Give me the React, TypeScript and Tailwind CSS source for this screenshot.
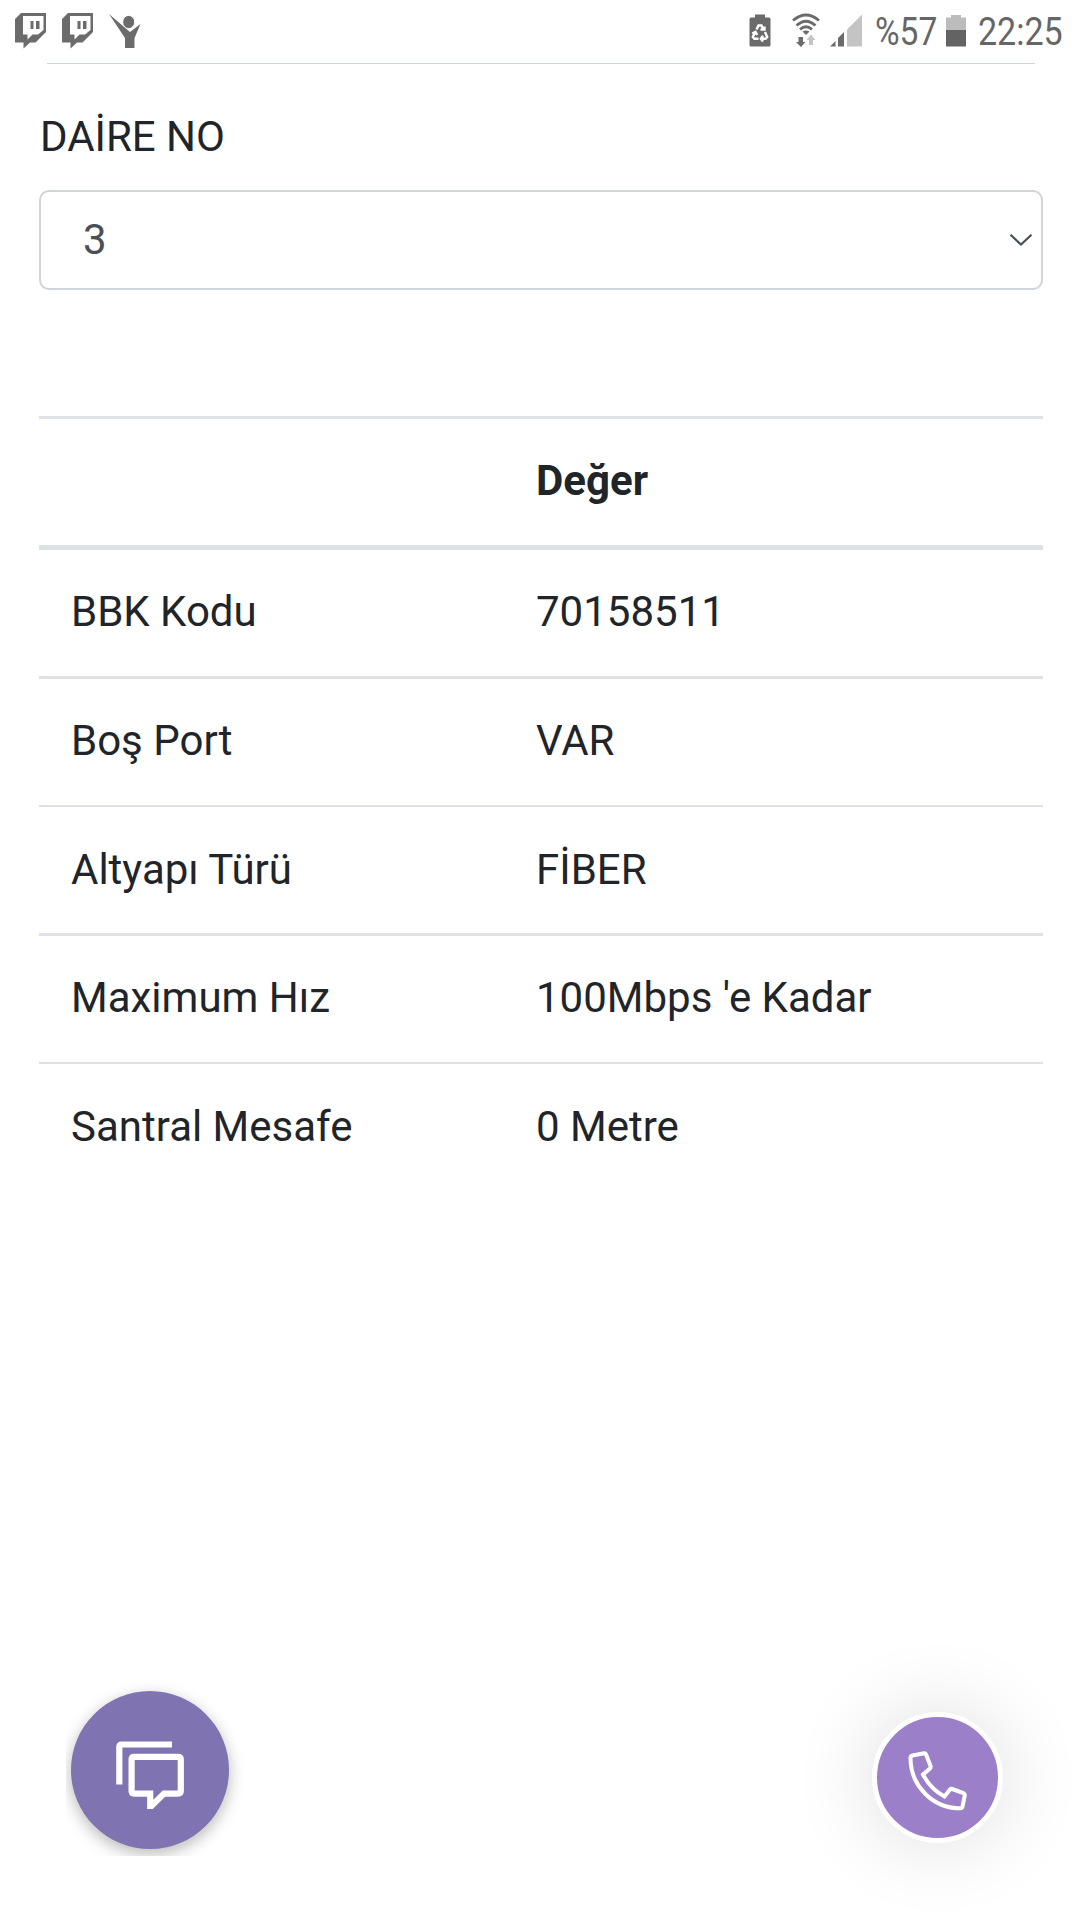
import React from "react";

interface IRow {
	label: string;
	value: string;
	className: string;
}

const rows: IRow[] = [
	{ label: "BBK Kodu", value: "70158511", className: "h-[126px] pt-[30px]" },
	{
		label: "Boş Port",
		value: "VAR",
		className: "h-[129px] border-t-[3px] pt-[30px]",
	},
	{
		label: "Altyapı Türü",
		value: "FİBER",
		className: "h-[128px] border-t-2 pt-[31px]",
	},
	{
		label: "Maximum Hız",
		value: "100Mbps 'e Kadar",
		className: "h-[129px] border-t-[3px] pt-[30px]",
	},
	{
		label: "Santral Mesafe",
		value: "0 Metre",
		className: "h-[128px] border-t-2 pt-[31px]",
	},
];

const TwitchIcon = () => (
	<svg className="h-9 w-8" viewBox="0 0 32 36">
		<path
			d="M6 0H31V19L20.5 29.5H15L8.500 35.500V29.500H0V6Z M8 3V21.500H12.500V26.500L17.500 21.500H23L28.500 17V3Z"
			fill="#6b6b6b"
			fillRule="evenodd"
		/>
		<path d="M15.500 8H18.500V16H15.500Z M21 8H24.500V16H21Z" fill="#6b6b6b" />
	</svg>
);

const StatusBar = () => (
	<div className="flex h-[63px] shrink-0">
		{/* notifications */}
		<div className="flex pt-[13px] pl-[15px]">
			<TwitchIcon />
			<div className="w-[15px]" />
			<TwitchIcon />
			<svg className="ml-[15px] h-9 w-8" viewBox="0 0 32 36" fill="#6b6b6b">
				<path d="M0 1L21 19L31.500 11L25.500 25V35H16V25Z" />
				<ellipse cx="19.700" cy="9" rx="6" ry="6.600" stroke="#fff" strokeWidth="1" />
			</svg>
		</div>

		{/* system icons */}
		<div className="ml-auto flex pt-[13px] pr-4">
			<svg className="h-9 w-[22px]" viewBox="0 0 22 36">
				<path
					d="M6 1.500H16V4.500H20Q21.500 4.500 21.500 6V32Q21.500 33.500 20 33.500H2Q.5 33.500 .5 32V6Q.5 4.500 2 4.500H6Z"
					fill="#6b6b6b"
				/>
				<g fill="none" stroke="#fff" strokeWidth="2.400">
					<path d="M7.500 16.500L9.500 12.500H12.500L14.500 16.500M11.500 16.500H15.500V13.500" />
					<path d="M16 19L18.200 24L16.500 25.800H12.500M14 22.800L11.800 25.800L14 28.500" />
					<path d="M9.500 25.800H5.500L3.800 24L6 19.500M3.200 20.500L6.500 18.800L8.200 22" />
				</g>
			</svg>
			<svg className="ml-[21px] h-9 w-7" viewBox="0 0 28 36">
				<g fill="none" stroke="#6b6b6b" strokeWidth="2.800">
					<path d="M1 7.500Q14 -3.500 27 7.500" />
					<path d="M4.500 12.500Q14 4 23.500 12.500" />
					<path d="M8 16.500Q14 11 20 16.500" />
				</g>
				<path d="M10.500 18.500Q14 16.500 17.500 18.500L14 22Z" fill="#6b6b6b" />
				<path d="M6.500 24H11V29H13.500L9 34L4 29H6.500Z" fill="#6b6b6b" />
				<path d="M17 32V27H14.500L19 21.500L23.500 27H21V32Z" fill="#c4c4c4" />
			</svg>
			<svg className="ml-[10px] h-9 w-8" viewBox="0 0 32 36">
				<path d="M0 33.500L5.500 28V33.500Z M8 25L14 19V33.500H8Z" fill="#6b6b6b" />
				<path d="M17 16.500L32 1.500V33.500H17Z" fill="#c4c4c4" />
			</svg>
			<div className="ml-[13px] w-[63px]">
				<span className="block w-max origin-left scale-x-[0.86] text-[39px] leading-[38px] text-[#666]">
					%57
				</span>
			</div>
			<svg className="ml-2 h-9 w-[20px]" viewBox="0 0 20 36">
				<path d="M5 2H15V4.500H20V17H0V4.500H5Z" fill="#bcbcbc" />
				<path d="M0 17H20V33.500H0Z" fill="#636363" />
			</svg>
			<div className="ml-3 w-[86px]">
				<span className="block w-max origin-left scale-x-[0.872] text-[39px] leading-[38px] text-[#666]">
					22:25
				</span>
			</div>
		</div>
	</div>
);

const ChatButton = () => (
	<div className="overflow-hidden pt-5 pr-5 pb-[7px] pl-[5px]">
		<button className="block h-[158px] w-[158px] rounded-full bg-[#8073b1] shadow-[0_5px_16px_rgba(0,0,0,0.28)]">
			<svg className="h-full w-full" viewBox="0 0 158 158" fill="none">
				<g stroke="#fff" strokeWidth="6.200">
					<path d="M48.300 93.500V56Q48.300 53.500 50.800 53.500H101" />
					<path d="M63 65.800H107Q109.800 65.800 109.800 68.500V100Q109.800 102.600 107 102.600H93L80.500 115H79.200V102.600H63Q60.600 102.600 60.600 100V68.500Q60.600 65.800 63 65.800Z" />
				</g>
			</svg>
		</button>
	</div>
);

const CallButton = () => (
	<button className="block h-[131px] w-[131px] rounded-full border-[5px] border-white bg-[#9b7fc9] shadow-[0_0_84px_rgba(0,0,0,0.14)]">
		<svg className="h-full w-full" viewBox="0 0 121 121" fill="none">
			<path
				d="M35.500 38.500L47 36.200Q48.500 36 49 37.200L53.500 49Q54 50.500 53 51.500L46 57.500Q53.500 72 67.500 79.500L73 72.500Q73.800 71.500 75.200 72L86.500 76.200Q88 77 87.800 78.500L85.500 89.500Q85.200 91.300 83.500 91.300C56 91.500 33.500 69 33.500 41Q33.500 39 35.500 38.500Z"
				stroke="#fff"
				strokeWidth="4"
			/>
		</svg>
	</button>
);

const App = () => {
	return (
		<div className="flex h-[1920px] w-[1080px] flex-col overflow-hidden bg-white font-['Roboto',sans-serif] text-[42px] leading-[63px] text-[#212529]">
			<StatusBar />
			<div className="mr-[45px] ml-[47px] h-px shrink-0 bg-[#ced4da]" />

			<main className="pt-[41px] pr-[37px] pl-[39px]">
				<label className="block pl-px">DAİRE NO</label>
				<div className="mt-[22px] flex h-[100px] items-center justify-between rounded-[10px] border-2 border-[#ced4da] pr-2 pl-[42px] text-[#495057]">
					<span className="pb-0.5">3</span>
					<svg className="h-3 w-6" viewBox="0 0 24 12" fill="none">
						<path d="M1.500 .8L12 10.500L22.500 .8" stroke="#495057" strokeWidth="2.200" />
					</svg>
				</div>

				{/* result table */}
				<div className="mt-[126px]">
					<div className="flex h-[134px] border-t-[3px] border-b-[5px] border-[#dee2e6] pt-[30px] font-bold">
						<div className="w-[497px]" />
						<div>Değer</div>
					</div>
					{rows.map((row) => (
						<div
							key={row.label}
							className={`flex border-[#dee2e6] pl-8 ${row.className}`}
						>
							<div className="w-[465px]">{row.label}</div>
							<div>{row.value}</div>
						</div>
					))}
				</div>
			</main>

			<footer className="mt-auto flex items-end justify-between pr-[77px] pb-16 pl-[66px]">
				<ChatButton />
				<div className="pb-[13px]">
					<CallButton />
				</div>
			</footer>
		</div>
	);
};

export default App;
